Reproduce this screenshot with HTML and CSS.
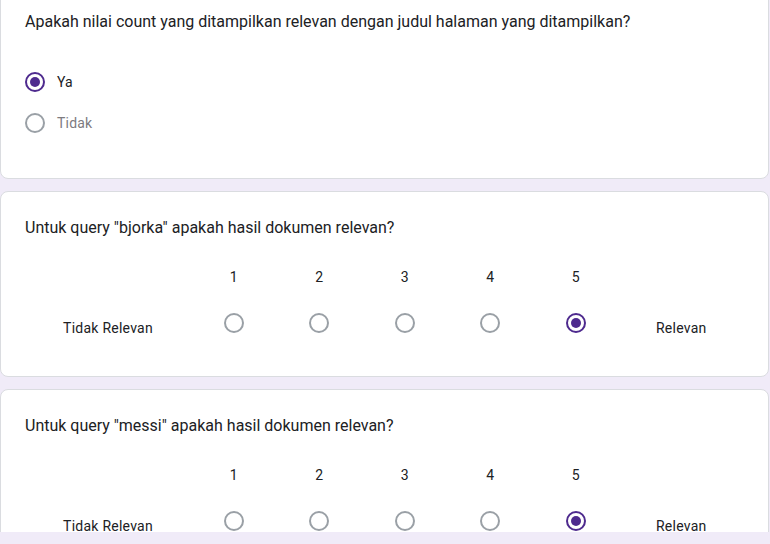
FILE: index.html
```html
<!DOCTYPE html>
<html lang="id">
<head>
<meta charset="utf-8">
<title>Form</title>
<link rel="stylesheet" href="styles.css">
</head>
<body>
<div class="viewport">
  <div class="stack">
    <section class="card">
      <div class="question">Apakah nilai count yang ditampilkan relevan dengan judul halaman yang ditampilkan?</div>
      <div class="options">
        <div class="option">
          <span class="radio checked"></span>
          <span class="opt-label">Ya</span>
        </div>
        <div class="option">
          <span class="radio"></span>
          <span class="opt-label dim">Tidak</span>
        </div>
      </div>
    </section>

    <section class="card">
      <div class="question">Untuk query "bjorka" apakah hasil dokumen relevan?</div>
      <div class="scale">
        <div class="blank"></div>
        <div class="num">1</div>
        <div class="num">2</div>
        <div class="num">3</div>
        <div class="num">4</div>
        <div class="num">5</div>
        <div class="blank"></div>
        <div class="end-label">Tidak Relevan</div>
        <div class="cell"><span class="radio"></span></div>
        <div class="cell"><span class="radio"></span></div>
        <div class="cell"><span class="radio"></span></div>
        <div class="cell"><span class="radio"></span></div>
        <div class="cell"><span class="radio checked"></span></div>
        <div class="end-label">Relevan</div>
      </div>
    </section>

    <section class="card">
      <div class="question">Untuk query "messi" apakah hasil dokumen relevan?</div>
      <div class="scale">
        <div class="blank"></div>
        <div class="num">1</div>
        <div class="num">2</div>
        <div class="num">3</div>
        <div class="num">4</div>
        <div class="num">5</div>
        <div class="blank"></div>
        <div class="end-label">Tidak Relevan</div>
        <div class="cell"><span class="radio"></span></div>
        <div class="cell"><span class="radio"></span></div>
        <div class="cell"><span class="radio"></span></div>
        <div class="cell"><span class="radio"></span></div>
        <div class="cell"><span class="radio checked"></span></div>
        <div class="end-label">Relevan</div>
      </div>
    </section>
  </div>
</div>
</body>
</html>
```

FILE: styles.css
```css
html, body {
  margin: 0;
  padding: 0;
}

body {
  background: #f0ebf8;
  font-family: Roboto, "Liberation Sans", Arial, sans-serif;
  color: #202124;
}

.viewport {
  height: 532px;
  overflow: hidden;
}

.stack {
  display: flex;
  flex-direction: column;
  gap: 12px;
  margin-top: -15px;
  margin-right: 1px;
}

.card {
  background: #fff;
  border: 1px solid #dadce0;
  border-radius: 8px;
  padding: 24px;
}

.question {
  font-size: 16px;
  line-height: 24px;
  color: #202124;
}

.options {
  display: flex;
  flex-direction: column;
  gap: 21px;
  margin-top: 38px;
  margin-bottom: 21px;
}

.option {
  display: flex;
  align-items: center;
  gap: 12px;
  height: 20px;
}

.opt-label {
  font-size: 14px;
  line-height: 20px;
  color: #202124;
  letter-spacing: 0.2px;
}

.opt-label.dim {
  color: #7d7b7f;
}

.radio {
  box-sizing: border-box;
  width: 20px;
  height: 20px;
  border: 2px solid #9aa0a6;
  border-radius: 50%;
  display: flex;
  align-items: center;
  justify-content: center;
  flex: none;
}

.radio.checked {
  border-color: #4e2a8e;
}

.radio.checked::after {
  content: "";
  width: 10px;
  height: 10px;
  border-radius: 50%;
  background: #4e2a8e;
}

.scale {
  display: grid;
  grid-template-columns: 166px repeat(5, 85.5px) 1fr;
  grid-template-rows: 20px 25px;
  row-gap: 26px;
  margin-top: 27px;
  margin-bottom: 14px;
}

.num {
  font-size: 14px;
  line-height: 20px;
  text-align: center;
  color: #202124;
}

.cell {
  display: flex;
  justify-content: center;
  align-items: flex-start;
}

.end-label {
  font-size: 14px;
  line-height: 20px;
  padding-top: 5px;
  text-align: center;
  color: #202124;
  letter-spacing: 0.25px;
}
```
